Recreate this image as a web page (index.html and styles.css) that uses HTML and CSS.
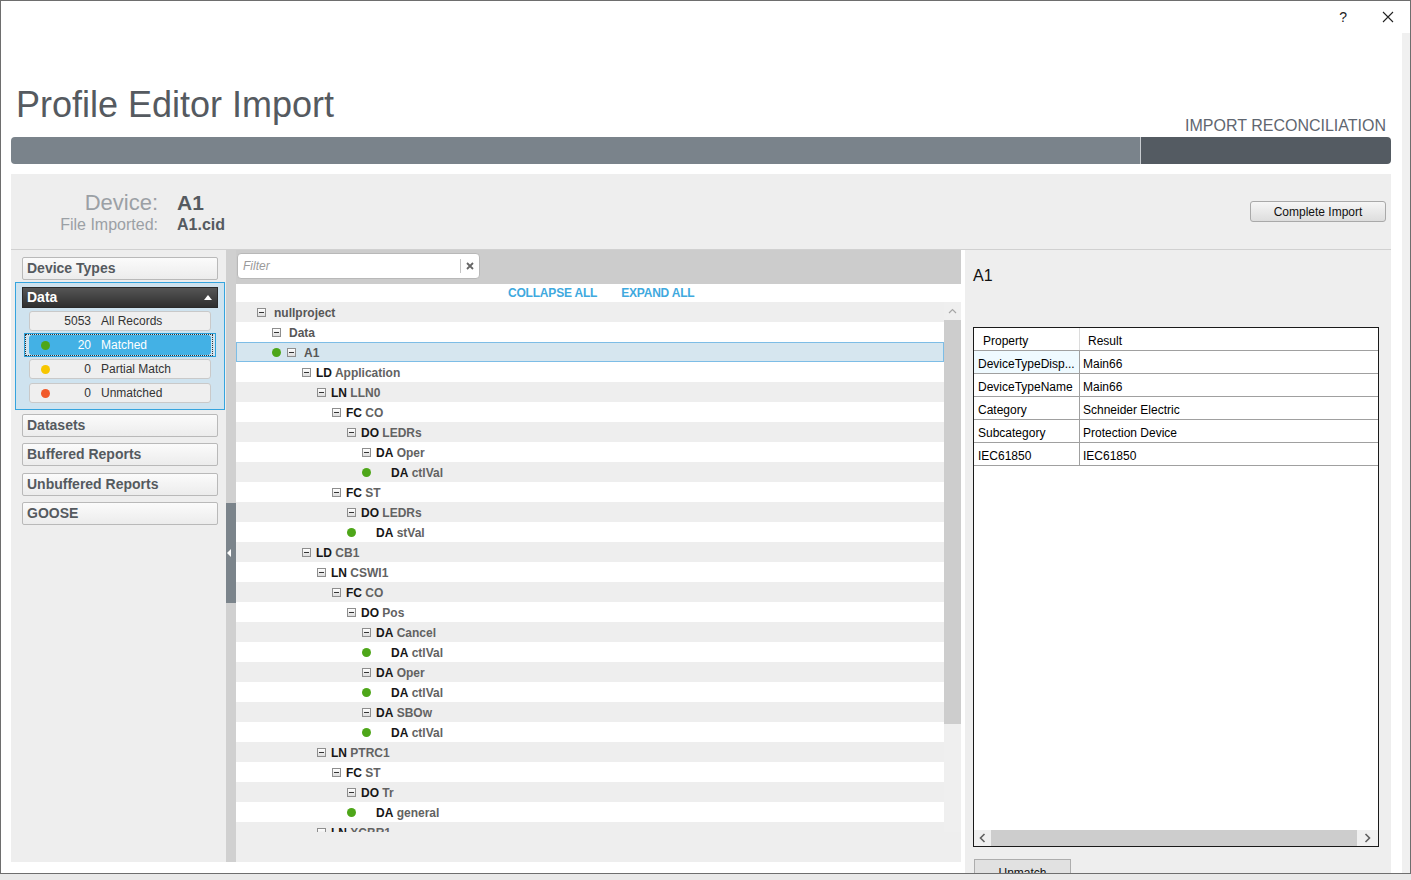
FILE: index.html
```html
<!DOCTYPE html>
<html>
<head>
<meta charset="utf-8">
<title>Profile Editor Import</title>
<link rel="stylesheet" href="styles.css">
</head>
<body>
<div class="window">
  <div class="titlebar">
    <span class="tb-help">?</span>
    <span class="tb-close"><svg width="12" height="12" viewBox="0 0 12 12"><path d="M1 1L11 11M11 1L1 11" stroke="#222" stroke-width="1.1" fill="none"/></svg></span>
  </div>
  <div class="frame">
    <div class="content">
      <header class="head">
        <h1 class="title">Profile Editor Import</h1>
        <div class="step">IMPORT RECONCILIATION</div>
      </header>
      <div class="progress"><div class="p-done"></div><div class="p-rest"></div></div>
      <div class="main">
        <div class="device-bar">
          <div class="dev-info">
            <span class="dl big">Device:</span><span class="dv big">A1</span>
            <span class="dl">File Imported:</span><span class="dv">A1.cid</span>
          </div>
          <button class="btn complete">Complete Import</button>
        </div>
        <div class="workspace">
          <aside class="left">
            <div class="acc">Device Types</div>
            <div class="data-box">
              <div class="data-hd"><span>Data</span><span class="tri"></span></div>
              <div class="subs">
                <div class="sub"><span class="dslot"></span><span class="num">5053</span><span class="lbl">All Records</span></div>
                <div class="sub sel"><span class="dslot"><span class="dot green"></span></span><span class="num">20</span><span class="lbl">Matched</span></div>
                <div class="sub"><span class="dslot"><span class="dot yellow"></span></span><span class="num">0</span><span class="lbl">Partial Match</span></div>
                <div class="sub"><span class="dslot"><span class="dot red"></span></span><span class="num">0</span><span class="lbl">Unmatched</span></div>
              </div>
            </div>
            <div class="acc first-after">Datasets</div>
            <div class="acc">Buffered Reports</div>
            <div class="acc wide">Unbuffered Reports</div>
            <div class="acc">GOOSE</div>
          </aside>
          <div class="splitter"><div class="sp-thumb"><span class="sp-arrow"></span></div></div>
          <section class="tree-panel">
            <div class="filter-bar">
              <div class="filter">
                <span class="ph">Filter</span>
                <span class="sep"></span>
                <span class="clr"><svg width="8" height="8" viewBox="0 0 8 8"><path d="M1 1L7 7M7 1L1 7" stroke="#666" stroke-width="1.8" fill="none"/></svg></span>
              </div>
            </div>
            <div class="links"><span>COLLAPSE ALL</span><span>EXPAND ALL</span></div>
            <div class="viewport">
              <div class="rows">
                <div class="row l0"><span class="ds"></span><span class="bs"><span class="tg"></span></span><span class="t top">nullproject</span></div>
                <div class="row l1"><span class="ds"></span><span class="bs"><span class="tg"></span></span><span class="t top">Data</span></div>
                <div class="row l2 sel"><span class="ds"><span class="dot green"></span></span><span class="bs"><span class="tg"></span></span><span class="t top">A1</span></div>
                <div class="row l3"><span class="ds"></span><span class="bs"><span class="tg"></span></span><span class="t"><b>LD</b> Application</span></div>
                <div class="row l4"><span class="ds"></span><span class="bs"><span class="tg"></span></span><span class="t"><b>LN</b> LLN0</span></div>
                <div class="row l5"><span class="ds"></span><span class="bs"><span class="tg"></span></span><span class="t"><b>FC</b> CO</span></div>
                <div class="row l6"><span class="ds"></span><span class="bs"><span class="tg"></span></span><span class="t"><b>DO</b> LEDRs</span></div>
                <div class="row l7"><span class="ds"></span><span class="bs"><span class="tg"></span></span><span class="t"><b>DA</b> Oper</span></div>
                <div class="row l8"><span class="ds"><span class="dot green"></span></span><span class="bs"></span><span class="t"><b>DA</b> ctlVal</span></div>
                <div class="row l5"><span class="ds"></span><span class="bs"><span class="tg"></span></span><span class="t"><b>FC</b> ST</span></div>
                <div class="row l6"><span class="ds"></span><span class="bs"><span class="tg"></span></span><span class="t"><b>DO</b> LEDRs</span></div>
                <div class="row l7"><span class="ds"><span class="dot green"></span></span><span class="bs"></span><span class="t"><b>DA</b> stVal</span></div>
                <div class="row l3"><span class="ds"></span><span class="bs"><span class="tg"></span></span><span class="t"><b>LD</b> CB1</span></div>
                <div class="row l4"><span class="ds"></span><span class="bs"><span class="tg"></span></span><span class="t"><b>LN</b> CSWI1</span></div>
                <div class="row l5"><span class="ds"></span><span class="bs"><span class="tg"></span></span><span class="t"><b>FC</b> CO</span></div>
                <div class="row l6"><span class="ds"></span><span class="bs"><span class="tg"></span></span><span class="t"><b>DO</b> Pos</span></div>
                <div class="row l7"><span class="ds"></span><span class="bs"><span class="tg"></span></span><span class="t"><b>DA</b> Cancel</span></div>
                <div class="row l8"><span class="ds"><span class="dot green"></span></span><span class="bs"></span><span class="t"><b>DA</b> ctlVal</span></div>
                <div class="row l7"><span class="ds"></span><span class="bs"><span class="tg"></span></span><span class="t"><b>DA</b> Oper</span></div>
                <div class="row l8"><span class="ds"><span class="dot green"></span></span><span class="bs"></span><span class="t"><b>DA</b> ctlVal</span></div>
                <div class="row l7"><span class="ds"></span><span class="bs"><span class="tg"></span></span><span class="t"><b>DA</b> SBOw</span></div>
                <div class="row l8"><span class="ds"><span class="dot green"></span></span><span class="bs"></span><span class="t"><b>DA</b> ctlVal</span></div>
                <div class="row l4"><span class="ds"></span><span class="bs"><span class="tg"></span></span><span class="t"><b>LN</b> PTRC1</span></div>
                <div class="row l5"><span class="ds"></span><span class="bs"><span class="tg"></span></span><span class="t"><b>FC</b> ST</span></div>
                <div class="row l6"><span class="ds"></span><span class="bs"><span class="tg"></span></span><span class="t"><b>DO</b> Tr</span></div>
                <div class="row l7"><span class="ds"><span class="dot green"></span></span><span class="bs"></span><span class="t"><b>DA</b> general</span></div>
                <div class="row l4"><span class="ds"></span><span class="bs"><span class="tg"></span></span><span class="t"><b>LN</b> XCBR1</span></div>
              </div>
              <div class="vbar">
                <div class="up"><svg width="9" height="6" viewBox="0 0 9 6"><path d="M1 5L4.5 1.5L8 5" stroke="#a6a6a6" stroke-width="1.2" fill="none"/></svg></div>
                <div class="thumb"></div>
              </div>
            </div>
            <div class="tree-foot"></div>
          </section>
          <div class="gutter"></div>
          <section class="detail">
            <h2 class="d-title">A1</h2>
            <div class="grid">
              <div class="gr hd"><div class="gc1">Property</div><div class="gc2">Result</div></div>
              <div class="gr"><div class="gc1 cur">DeviceTypeDisp...</div><div class="gc2">Main66</div></div>
              <div class="gr"><div class="gc1">DeviceTypeName</div><div class="gc2">Main66</div></div>
              <div class="gr"><div class="gc1">Category</div><div class="gc2">Schneider Electric</div></div>
              <div class="gr"><div class="gc1">Subcategory</div><div class="gc2">Protection Device</div></div>
              <div class="gr"><div class="gc1">IEC61850</div><div class="gc2">IEC61850</div></div>
              <div class="hs">
                <span class="ha"><svg width="7" height="10" viewBox="0 0 7 10"><path d="M5.5 1L1.5 5L5.5 9" stroke="#606060" stroke-width="1.6" fill="none"/></svg></span>
                <span class="hthumb"></span>
                <span class="ha right"><svg width="7" height="10" viewBox="0 0 7 10"><path d="M1.5 1L5.5 5L1.5 9" stroke="#606060" stroke-width="1.6" fill="none"/></svg></span>
              </div>
            </div>
            <button class="unmatch">Unmatch</button>
          </section>
        </div>
      </div>
    </div>
    <div class="vscroll"></div>
  </div>
</div>
</body>
</html>
```

FILE: styles.css
```css
* { box-sizing: border-box; }
html, body { margin: 0; padding: 0; }
body {
  width: 1411px;
  height: 880px;
  overflow: hidden;
  background: #e9e9e9;
  font-family: "Liberation Sans", Arial, sans-serif;
}

.window {
  width: 1411px;
  height: 874px;
  border: 1px solid #6e6e6e;
  background: #fff;
  display: flex;
  flex-direction: column;
  overflow: hidden;
}

/* title bar */
.titlebar {
  height: 32px;
  flex: none;
  display: flex;
  justify-content: flex-end;
  align-items: center;
  padding-right: 16px;
}
.tb-help { font-size: 14px; color: #222; margin-right: 35px; }
.tb-close { display: flex; }

.frame { flex: 1; display: flex; min-height: 0; }
.content {
  flex: 1;
  padding-left: 10px;
  display: flex;
  flex-direction: column;
  min-height: 0;
}
.vscroll { width: 8px; background: #f0f0f0; }

/* header */
.head {
  width: 1380px;
  height: 104px;
  flex: none;
  display: flex;
  justify-content: space-between;
  align-items: flex-end;
}
.title {
  margin: 0 0 12px 5px;
  font-size: 36px;
  line-height: 40px;
  font-weight: normal;
  color: #555a60;
}
.step {
  margin: 0 5px 1px 0;
  font-size: 16px;
  line-height: 20px;
  color: #5f6670;
}

.progress {
  width: 1380px;
  height: 27px;
  flex: none;
  display: flex;
  border-radius: 4px;
  overflow: hidden;
}
.p-done { width: 1130px; background: #7a838b; border-right: 1px solid #c8ccd0; }
.p-rest { flex: 1; background: #545b62; }

.main {
  margin-top: 10px;
  width: 1380px;
  flex: 1;
  display: flex;
  flex-direction: column;
  min-height: 0;
}

/* device bar */
.device-bar {
  height: 76px;
  flex: none;
  background: #eeeeee;
  border-bottom: 1px solid #d0d0d0;
  display: flex;
  justify-content: space-between;
  align-items: flex-start;
}
.dev-info {
  display: grid;
  grid-template-columns: 147px auto;
  column-gap: 19px;
  align-items: baseline;
  padding-top: 17px;
}
.dl { text-align: right; color: #9ba0a5; font-size: 16px; line-height: 20px; }
.dl.big { font-size: 22px; line-height: 24px; }
.dv { font-weight: bold; color: #555a60; font-size: 16px; line-height: 20px; }
.dv.big { font-size: 21px; line-height: 24px; }

.btn.complete {
  margin: 27px 5px 0 0;
  width: 136px;
  height: 21px;
  padding: 0;
  border: 1px solid #a9a9a9;
  border-radius: 3px;
  background: linear-gradient(#f6f6f6, #dddddd);
  font-family: "Liberation Sans", Arial, sans-serif;
  font-size: 12px;
  color: #111;
}

/* workspace */
.workspace {
  flex: 1;
  display: flex;
  align-items: flex-start;
  min-height: 0;
}

/* left accordion */
.left {
  width: 215px;
  height: 612px;
  flex: none;
  background: #eeeeee;
  padding-top: 7px;
}
.acc {
  margin: 6px 0 0 11px;
  width: 196px;
  height: 23px;
  border: 1px solid #b9b9b9;
  border-radius: 2px;
  background: linear-gradient(#fbfbfb, #ececec);
  font-size: 14px;
  font-weight: bold;
  color: #555a5f;
  padding: 0 0 2px 4px;
  display: flex;
  align-items: center;
}
.acc:first-child { margin-top: 0; }
.acc.first-after { margin-top: 4px; }
.acc.wide { margin-top: 7px; }

.data-box {
  margin: 2px 0 0 4px;
  width: 210px;
  border: 1px solid #35a4de;
  background: #cfe3ef;
  padding: 4px 6px 6px;
}
.data-hd {
  height: 21px;
  background: linear-gradient(#555555, #2f2f2f);
  border: 1px solid #2a2a2a;
  display: flex;
  align-items: center;
  justify-content: space-between;
  padding: 0 5px 2px 4px;
  color: #fff;
  font-size: 14px;
  font-weight: bold;
}
.tri {
  width: 0;
  height: 0;
  margin-top: 2px;
  border-left: 4px solid transparent;
  border-right: 4px solid transparent;
  border-bottom: 5px solid #fff;
}
.subs { padding: 0 7px; }
.sub {
  position: relative;
  height: 20px;
  margin-top: 4px;
  border: 1px solid #c9c9c9;
  border-radius: 3px;
  background: #efefef;
  display: flex;
  align-items: center;
  font-size: 12px;
  color: #333;
}
.sub:first-child { margin-top: 3px; }
.sub .dslot { width: 28px; padding-left: 11px; display: flex; align-items: center; }
.sub .num { width: 33px; text-align: right; }
.sub .lbl { margin-left: 10px; }
.sub.sel { background: #43b1e5; border-color: #43b1e5; color: #fff; }
.sub.sel::before {
  content: "";
  position: absolute;
  top: -2px; bottom: -2px; left: -5px; right: -3px;
  border: 1px dotted #333;
}
.sub.sel::after {
  content: "";
  position: absolute;
  top: -3px; bottom: -3px; left: -6px; right: -6px;
  border: 1px solid #2aa0da;
}

.dot { display: inline-block; width: 9px; height: 9px; border-radius: 50%; }
.dot.green { background: #4ea619; }
.dot.yellow { background: #f7c600; }
.dot.red { background: #f15a2b; }

/* splitter */
.splitter {
  width: 10px;
  height: 612px;
  flex: none;
  background: #d0d0d0;
  padding-top: 253px;
}
.sp-thumb {
  height: 100px;
  background: #7b848b;
  display: flex;
  align-items: center;
  padding-left: 1px;
}
.sp-arrow {
  width: 0; height: 0;
  border-top: 4px solid transparent;
  border-bottom: 4px solid transparent;
  border-right: 4px solid #fff;
}

/* tree panel */
.tree-panel {
  width: 725px;
  height: 612px;
  flex: none;
  background: #eeeeee;
  display: flex;
  flex-direction: column;
}
.filter-bar {
  height: 34px;
  flex: none;
  background: #cccccc;
  padding: 3px 0 0 1px;
}
.filter {
  width: 243px;
  height: 26px;
  background: #fff;
  border: 1px solid #b8b8b8;
  border-radius: 4px;
  display: flex;
  align-items: center;
}
.filter .ph { flex: 1; font-size: 12px; font-style: italic; color: #9a9a9a; padding-left: 5px; }
.filter .sep { width: 1px; height: 14px; background: #c4c4c4; }
.filter .clr { width: 18px; display: flex; justify-content: center; }

.links {
  height: 18px;
  flex: none;
  background: #fff;
  padding: 0 0 1px 272px;
  display: flex;
  align-items: center;
  gap: 24px;
  font-size: 12px;
  font-weight: bold;
  letter-spacing: -0.2px;
  color: #3fa9de;
}

.viewport { height: 530px; flex: none; display: flex; overflow: hidden; }
.rows { width: 708px; flex: none; }
.row {
  height: 20px;
  display: flex;
  align-items: center;
  font-size: 12px;
  font-weight: bold;
  color: #626262;
  white-space: nowrap;
  background: #fff;
}
.row:nth-child(odd) { background: #eeeeee; }
.row.sel { background: #d6e6ef; box-shadow: inset 0 0 0 1px #7dbde6; }
.row .ds { width: 15px; flex: none; display: flex; align-items: center; padding-top: 1px; }
.row .bs { width: 14px; flex: none; display: flex; align-items: center; padding-top: 1px; }
.row .t { padding-top: 2px; }
.row .t b { color: #161616; }
.row .t.top { margin-left: 3px; color: #575757; }
.tg {
  position: relative;
  width: 9px;
  height: 9px;
  border: 1px solid #8e8e8e;
  background: linear-gradient(#ffffff, #dcdcdc);
}
.tg::after {
  content: "";
  position: absolute;
  left: 1px; right: 1px; top: 3px;
  height: 1px;
  background: #333;
}
.l0 { padding-left: 6px; }
.l1 { padding-left: 21px; }
.l2 { padding-left: 36px; }
.l3 { padding-left: 51px; }
.l4 { padding-left: 66px; }
.l5 { padding-left: 81px; }
.l6 { padding-left: 96px; }
.l7 { padding-left: 111px; }
.l8 { padding-left: 126px; }

.vbar { width: 17px; flex: none; background: #efefef; }
.vbar .up { height: 18px; display: flex; align-items: center; justify-content: center; }
.vbar .thumb { height: 404px; background: #cdcdcd; }
.tree-foot { flex: 1; }

.gutter { width: 4px; flex: none; }

/* detail */
.detail {
  width: 426px;
  height: 623px;
  flex: none;
  background: #eeeeee;
  padding: 16px 0 0 8px;
  overflow: hidden;
}
.d-title {
  margin: 0;
  font-size: 16px;
  line-height: 20px;
  font-weight: normal;
  color: #111;
}
.grid {
  margin-top: 41px;
  width: 406px;
  height: 520px;
  border: 1px solid #1a1a1a;
  background: #fff;
  display: flex;
  flex-direction: column;
}
.gr {
  height: 23px;
  flex: none;
  display: flex;
  border-bottom: 1px solid #a0a0a0;
  font-size: 12px;
  color: #000;
}
.gc1 {
  width: 106px;
  border-right: 1px solid #a0a0a0;
  padding: 3px 0 0 4px;
  display: flex;
  align-items: center;
  white-space: nowrap;
  overflow: hidden;
}
.gc2 { flex: 1; padding: 3px 0 0 3px; display: flex; align-items: center; white-space: nowrap; }
.gc1.cur { background: #effaff; }
.gr.hd .gc1 { padding-left: 9px; border-right-color: #dcdcdc; }
.gr.hd .gc2 { padding-left: 8px; }
.hs {
  margin-top: auto;
  height: 16px;
  flex: none;
  display: flex;
  align-items: stretch;
  background: #f0f0f0;
}
.ha { width: 17px; display: flex; align-items: center; justify-content: center; }
.ha.right { width: 21px; }
.hthumb { flex: 1; background: #cdcdcd; }

.unmatch {
  display: block;
  margin: 12px 0 0 1px;
  width: 97px;
  height: 24px;
  padding: 4px 0 0;
  border: 1px solid #adadad;
  background: #e1e1e1;
  font-family: "Liberation Sans", Arial, sans-serif;
  font-size: 12px;
  color: #111;
}
```
